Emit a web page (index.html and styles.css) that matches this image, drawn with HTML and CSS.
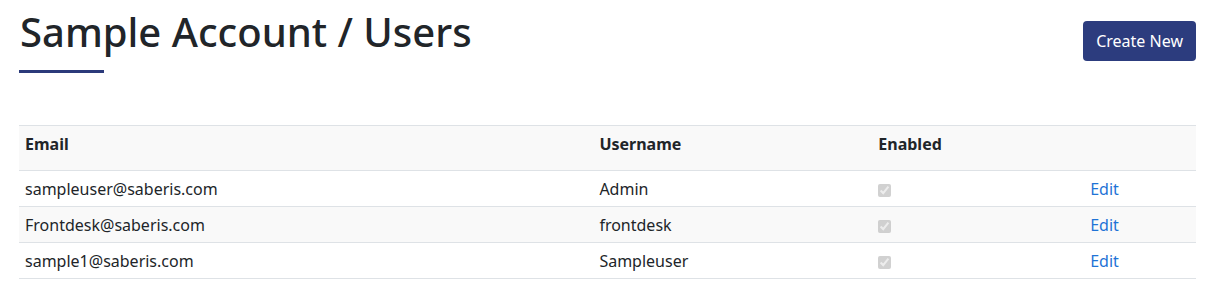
FILE: index.html
```html
<!DOCTYPE html>
<html lang="en">
<head>
    <meta charset="UTF-8">
    <meta name="viewport" content="width=device-width, initial-scale=1.0">
    <title>Sample Account / Users</title>
    <link rel="stylesheet" href="styles.css">
</head>
<body>
    <div class="page">
        <div class="page-header">
            <div class="title-block">
                <h1>Sample Account / Users</h1>
                <div class="title-rule"></div>
            </div>
            <button class="btn-create">Create New</button>
        </div>

        <table class="users-table">
            <thead>
                <tr>
                    <th class="col-email">Email</th>
                    <th class="col-username">Username</th>
                    <th class="col-enabled">Enabled</th>
                    <th class="col-actions"></th>
                </tr>
            </thead>
            <tbody>
                <tr>
                    <td>sampleuser@saberis.com</td>
                    <td>Admin</td>
                    <td><input type="checkbox" checked disabled></td>
                    <td><a href="#">Edit</a></td>
                </tr>
                <tr>
                    <td>Frontdesk@saberis.com</td>
                    <td>frontdesk</td>
                    <td><input type="checkbox" checked disabled></td>
                    <td><a href="#">Edit</a></td>
                </tr>
                <tr>
                    <td>sample1@saberis.com</td>
                    <td>Sampleuser</td>
                    <td><input type="checkbox" checked disabled></td>
                    <td><a href="#">Edit</a></td>
                </tr>
            </tbody>
        </table>
    </div>
</body>
</html>
```

FILE: styles.css
```css
body {
    font-family: 'Noto Sans', 'Open Sans', sans-serif;
    margin: 0;
    padding: 0;
    background: #fff;
    color: #212529;
}

.page {
    padding: 0 24px 0 19px;
}

.page-header {
    display: flex;
    justify-content: space-between;
    align-items: flex-start;
    height: 125px;
}

h1 {
    font-size: 40px;
    font-weight: 500;
    line-height: 48px;
    margin: 8px 0 0 1px;
}

.title-rule {
    width: 85px;
    height: 3px;
    background: #2b3a7a;
    margin-top: 14px;
}

.btn-create {
    margin-top: 21px;
    height: 40px;
    padding: 0 13px;
    font-family: inherit;
    font-size: 16px;
    color: #fff;
    background-color: #2c3c7e;
    border: none;
    border-radius: 4px;
    cursor: pointer;
}

.users-table {
    width: 100%;
    border-collapse: collapse;
    font-size: 16px;
}

.users-table th,
.users-table td {
    text-align: left;
    padding: 0 6px;
    border-top: 1px solid #dee2e6;
}

.users-table th {
    height: 36px;
    padding-bottom: 8px;
    font-weight: 700;
    border-bottom: 1px solid #dee2e6;
    background: #f9f9f9;
}

.users-table td {
    height: 35px;
}

.users-table tbody tr:nth-child(even) td {
    background: #f9f9f9;
}

.users-table tbody tr:last-child td {
    border-bottom: 1px solid #dee2e6;
}

.col-email { width: 48.8%; }
.col-username { width: 23.7%; }
.col-enabled { width: 18%; }

.users-table input[type=checkbox] {
    margin: 0;
    width: 13px;
    height: 13px;
    vertical-align: middle;
}

.users-table a {
    color: #1f73d6;
    text-decoration: none;
}
```
